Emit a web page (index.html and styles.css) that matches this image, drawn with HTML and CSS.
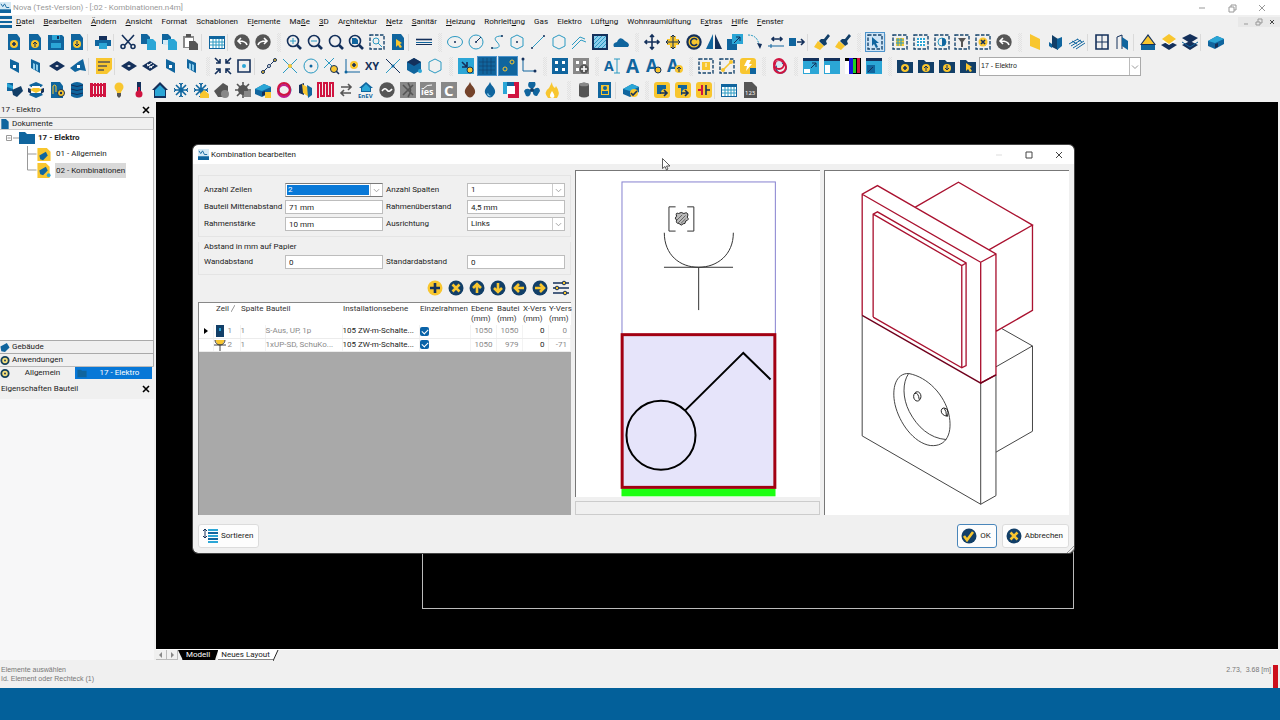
FILE: index.html
```html
<!DOCTYPE html>
<html lang="de">
<head>
<meta charset="utf-8">
<title>Nova (Test-Version)</title>
<link rel="stylesheet" href="styles.css">
</head>
<body>
<header class="titlebar">
  <svg class="app-icon" viewBox="0 0 12 12"><path class="pale" d="M0 0h12v12H0z"/><path class="b" d="M0 8h12v4H0z"/><path class="sb" d="M1 2l2 3 2-3 2 4 3 0"/></svg>
  <span class="titlebar-text">Nova (Test-Version) - [:02 - Kombinationen.n4m]</span>
  <div class="window-controls">
    <button aria-label="Minimieren"><svg viewBox="0 0 10 10"><path class="sc" d="M2 5h6"/></svg></button>
    <button aria-label="Wiederherstellen"><svg viewBox="0 0 10 10"><path class="sc" d="M2 4h5v5H2zM4 4V2h5v5H7"/></svg></button>
    <button aria-label="Schließen"><svg viewBox="0 0 10 10"><path class="sc" d="M2 2l6 6M8 2l-6 6"/></svg></button>
  </div>
</header>
<div class="menubar">
  <svg class="menu-icon" viewBox="0 0 12 12"><path class="b" d="M0 0h12v3H0zM0 5h12v2H0zM0 9h12v3H0z"/></svg>
  <nav class="menu">
    <button><u>D</u>atei</button><button><u>B</u>earbeiten</button><button><u>Ä</u>ndern</button><button><u>A</u>nsicht</button><button>Format</button><button>Schablonen</button><button>E<u>l</u>emente</button><button>Ma<u>ß</u>e</button><button><u>3</u>D</button><button>Ar<u>c</u>hitektur</button><button><u>N</u>etz</button><button><u>S</u>anitär</button><button><u>H</u>eizung</button><button>Rohrleit<u>u</u>ng</button><button>Gas</button><button>Elektro</button><button>Lüft<u>u</u>ng</button><button>Wohnraumlüftung</button><button>E<u>x</u>tras</button><button><u>H</u>ilfe</button><button><u>F</u>enster</button>
  </nav>
  <div class="mdi-controls">
    <button aria-label="Dokument minimieren"><svg viewBox="0 0 10 10"><path class="sc" d="M3 7h4"/></svg></button>
    <button aria-label="Dokument wiederherstellen"><svg viewBox="0 0 10 10"><path class="sc" d="M2 5h4v3H2zM4 5V2h4v4H6"/></svg></button>
    <button aria-label="Dokument schließen"><svg viewBox="0 0 10 10"><path class="sd" d="M3 3l4 4M7 3l-4 4"/></svg></button>
  </div>
</div>
<div class="toolbars">
  <div class="toolbar" id="bar-main"></div>
  <div class="toolbar inset" id="bar-draw"></div>
  <div class="toolbar inset" id="bar-apps"></div>
</div>

<main class="main">
  <aside class="side">
    <div class="side-head"><span>17 - Elektro</span><button class="close" aria-label="Bereich schließen"><svg viewBox="0 0 8 8"><path class="sk" d="M1 1l6 6M7 1l-6 6"/></svg></button></div>
    <button class="side-bar"><svg viewBox="0 0 10 12"><path class="b" d="M1 1h5l3 3v8H1z"/></svg>Dokumente</button>
    <div class="tree">
      <div class="tree-row root"><svg class="expander" viewBox="0 0 14 8"><path class="sc" d="M1.500 1.500h5v5h-5zM2.500 4h3M8 4h6"/></svg><svg class="folder" viewBox="0 0 16 14"><path class="b" d="M0 1h6l2 2h8v10H0z"/></svg><b>17 - Elektro</b></div>
      <div class="tree-row leaf"><svg class="branch" viewBox="0 0 10 16"><path class="sc" d="M.5 0v16M.5 8h9"/></svg><svg class="doc" viewBox="0 0 14 16"><path class="y" d="M0 1h10l4 4v10H0z"/><path class="b" d="M2 9l7-4 2 4-5 5-3-1z"/></svg><span>01 - Allgemein</span></div>
      <div class="tree-row leaf"><svg class="branch" viewBox="0 0 10 16"><path class="sc" d="M.5 0v8h9"/></svg><svg class="doc" viewBox="0 0 14 16"><path class="y" d="M0 0h9l4 4v12H0z"/><path class="b" d="M2 8l7-4 2 4-5 5-3-1z"/><circle class="l" cx="12" cy="13" r="2"/></svg><span class="current">02 - Kombinationen</span></div>
    </div>
    <button class="side-bar"><svg viewBox="0 0 10 12"><path class="b" d="M0 5l7-4 3 5-5 5-4-1z"/></svg>Gebäude</button>
    <button class="side-bar"><svg viewBox="0 0 10 12"><circle class="ring" cx="5" cy="6" r="4"/><circle class="n" cx="5" cy="6" r="1"/></svg>Anwendungen</button>
    <div class="side-tabs">
      <button><svg viewBox="0 0 10 12"><circle class="ring" cx="5" cy="6" r="4"/><circle class="n" cx="5" cy="6" r="1"/></svg><span>Allgemein</span></button>
      <button class="active"><svg viewBox="0 0 10 12"><path class="b" d="M0 2h4l1 1h5v7H0z"/></svg><span>17 - Elektro</span></button>
    </div>
    <div class="side-head props"><span>Eigenschaften Bauteil</span><button class="close" aria-label="Eigenschaften schließen"><svg viewBox="0 0 8 8"><path class="sk" d="M1 1l6 6M7 1l-6 6"/></svg></button></div>
    <div class="side-empty"></div>
  </aside>

  <section class="work">
    <div class="canvas">
      <div class="room"></div>
      <div class="dialog" role="dialog" aria-label="Kombination bearbeiten">
        <div class="dialog-title">
          <svg class="app-icon" viewBox="0 0 12 12"><path class="pale" d="M0 0h12v12H0z"/><path class="b" d="M0 8h12v4H0z"/><path class="sb" d="M1 2l2 3 2-3 2 4 3 0"/></svg>
          <span>Kombination bearbeiten</span>
          <div class="window-controls dialog-controls">
            <button aria-label="Minimieren" disabled><svg viewBox="0 0 10 10"><path class="sx" d="M2 5h6"/></svg></button>
            <button aria-label="Maximieren"><svg viewBox="0 0 10 10"><path class="sd" d="M2 2h6v6H2z"/></svg></button>
            <button aria-label="Schließen"><svg viewBox="0 0 10 10"><path class="sd" d="M2 2l6 6M8 2l-6 6"/></svg></button>
          </div>
        </div>
        <div class="dialog-body">
          <div class="settings">
            <div class="group fields">
              <label for="rows">Anzahl Zeilen</label>
              <div class="select focus"><select id="rows"><option>2</option></select><svg viewBox="0 0 8 8"><path class="sc" d="M1 3l3 3 3-3"/></svg></div>
              <label for="cols">Anzahl Spalten</label>
              <div class="select"><select id="cols"><option>1</option></select><svg viewBox="0 0 8 8"><path class="sc" d="M1 3l3 3 3-3"/></svg></div>
              <label for="mid">Bauteil Mittenabstand</label><input id="mid" value="71 mm">
              <label for="over">Rahmenüberstand</label><input id="over" value="4,5 mm">
              <label for="thick">Rahmenstärke</label><input id="thick" value="10 mm">
              <label for="align">Ausrichtung</label>
              <div class="select"><select id="align"><option>Links</option></select><svg viewBox="0 0 8 8"><path class="sc" d="M1 3l3 3 3-3"/></svg></div>
            </div>
            <div class="group paper">
              <div class="legend">Abstand in mm auf Papier</div>
              <div class="fields">
                <label for="wall">Wandabstand</label><input id="wall" value="0">
                <label for="std">Standardabstand</label><input id="std" value="0">
              </div>
            </div>
            <div class="actions">
              <button aria-label="Hinzufügen"><svg viewBox="0 0 16 16"><circle class="y" cx="8" cy="8" r="7.500"/><path class="sn3" d="M8 3v10M3 8h10"/></svg></button>
              <button aria-label="Entfernen"><svg viewBox="0 0 16 16"><circle class="dk" cx="8" cy="8" r="7.500"/><path class="sy3" d="M4.500 4.500l7 7M11.500 4.500l-7 7"/></svg></button>
              <button aria-label="Nach oben"><svg viewBox="0 0 16 16"><circle class="dk" cx="8" cy="8" r="7.500"/><path class="sy3" d="M8 13V5M4 8l4-4 4 4"/></svg></button>
              <button aria-label="Nach unten"><svg viewBox="0 0 16 16"><circle class="dk" cx="8" cy="8" r="7.500"/><path class="sy3" d="M8 3v8M4 8l4 4 4-4"/></svg></button>
              <button aria-label="Nach links"><svg viewBox="0 0 16 16"><circle class="dk" cx="8" cy="8" r="7.500"/><path class="sy3" d="M13 8H5M8 4L4 8l4 4"/></svg></button>
              <button aria-label="Nach rechts"><svg viewBox="0 0 16 16"><circle class="dk" cx="8" cy="8" r="7.500"/><path class="sy3" d="M3 8h8M8 4l4 4-4 4"/></svg></button>
              <button aria-label="Optionen"><svg viewBox="0 0 16 16"><path class="sn2" d="M0 3h16M0 8h16M0 13h16"/><circle class="knob" cx="11" cy="3" r="1.800"/><circle class="knob" cx="4" cy="8" r="1.800"/><circle class="knob" cx="12" cy="13" r="1.800"/></svg></button>
            </div>
            <div class="grid-area">
              <table>
                <colgroup><col class="c-mark"><col class="c-row"><col class="c-col"><col class="c-part"><col class="c-level"><col class="c-frame"><col class="c-num"><col class="c-num"><col class="c-num"><col></colgroup>
                <thead><tr><th></th><th>Zeil<svg class="sort" viewBox="0 0 4 8"><path class="sc" d="M0 8l4-7"/></svg></th><th>Spalte</th><th>Bauteil</th><th>Installationsebene</th><th>Einzelrahmen</th><th>Ebene<br>(mm)</th><th>Bautei<br>(mm)</th><th>X-Vers<br>(mm)</th><th>Y-Vers<br>(mm)</th></tr></thead>
                <tbody>
                  <tr><td><svg class="marker" viewBox="0 0 4 6"><path class="k" d="M0 0l4 3-4 3z"/></svg></td><td><svg class="part" viewBox="0 0 12 12"><path class="dk" d="M2 0h8v12H2z"/><path class="l" d="M5 3h2v3H5z"/></svg>1</td><td>1</td><td>S-Aus, UP, 1p</td><td class="on">105 ZW-m-Schalte...</td><td><input type="checkbox" checked aria-label="Einzelrahmen Zeile 1"></td><td class="num">1050</td><td class="num">1050</td><td class="num on">0</td><td class="num">0</td></tr>
                  <tr><td></td><td><svg class="part" viewBox="0 0 12 12"><path class="y" d="M1 1h10l-3 5H4z"/><path class="sd" d="M1 1a5 5 0 0 0 10 0M0 6h12M6 6v6"/></svg>2</td><td>1</td><td>1xUP-SD, SchuKo...</td><td class="on">105 ZW-m-Schalte...</td><td><input type="checkbox" checked aria-label="Einzelrahmen Zeile 2"></td><td class="num">1050</td><td class="num">979</td><td class="num on">0</td><td class="num">-71</td></tr>
                </tbody>
              </table>
            </div>
          </div>

          <div class="preview">
            <svg class="sheet" viewBox="16 90 735 981" preserveAspectRatio="xMidYMin meet">
              <rect x="154.500" y="123" width="462" height="460" fill="none" stroke="#8580cf" stroke-width="3"/>
              <rect x="153" y="1046" width="464" height="24" fill="#1cff12"/>
              <rect x="155" y="583" width="460" height="460" fill="#e6e4fa" stroke="#a20012" stroke-width="9"/>
              <g fill="none" stroke="#000" stroke-width="6"><circle cx="272" cy="886" r="104"/><path d="M345 811L520 638L602 718"/></g>
              <g fill="none" stroke="#333" stroke-width="3"><path d="M282 276C282 342 328 380 385 380S490 342 490 276M281 380H489M385.500 380V509"/><path d="M316 198H296V271H316M351 198H371V271H351"/></g>
              <path d="M325 218q8-6 16 0q12-6 12 5l-2 6q8 8-5 12q0 10-7 8l-6 4-7-5q-10 0-7-10q-8-6 0-12q-4-12 6-8z" fill="#bbb" stroke="#222" stroke-width="3"/><path d="M318 240l18-18M324 246l22-22M332 248l14-14" stroke="#333" stroke-width="2"/>
            </svg>
            <div class="preview-status"></div>
          </div>

          <div class="model">
            <svg viewBox="12 90 735 1035" preserveAspectRatio="xMidYMin meet" fill="none">
              <g stroke="#444" stroke-width="3"><path d="M124 525V888L481 1094L527 1068V704M481 729V1094M545 565L637 617V874L527 937M527 680L637 617"/>
              <path d="M264 700C225 699 212 745 223 794C236 849 279 909 329 917C380 922 397 877 385 822C372 766 323 711 264 700zM264 700C245 727 245 774 266 815C290 861 327 895 377 899"/><ellipse cx="290" cy="769" rx="11" ry="14" stroke="#222"/><path d="M283 760q10-4 13 19M380 808q-15-10-18 4q0 14 19 17q4-11-1-21zM371 805q7 8 7 23" stroke="#222"/></g>
              <g stroke="#aa1230" stroke-width="4"><path d="M124 525V160L170 134L527 340V704L481 729V365L124 160M481 365L527 340M284 199L414 124L637 253L507 327M637 253V510L527 573"/><path d="M157 530V220L170 213L437 367V676L424 683L157 530M157 220L424 375V683M424 375L437 367"/></g>
              <path d="M124 525L481 729L527 704" stroke="#70001c" stroke-width="4"/>
            </svg>
          </div>
        </div>
        <div class="dialog-foot">
          <button class="btn"><svg viewBox="0 0 16 16"><path class="sn" d="M3 1v9M1 3l2-2 2 2M1 8l2 2 2-2"/><path class="l" d="M6 1h10v2H6zM6 7h10v2H6zM6 13h10v2H6z"/><path class="b" d="M6 4h10v2H6zM6 10h10v2H6z"/></svg>Sortieren</button>
          <span class="spacer"></span>
          <button class="btn primary"><svg viewBox="0 0 16 16"><circle class="dk" cx="8" cy="8" r="7.500"/><path class="sy3" d="M3 8l3 4 6-8"/></svg>OK</button>
          <button class="btn"><svg viewBox="0 0 16 16"><circle class="dk" cx="8" cy="8" r="7.500"/><path class="sy3" d="M4.500 4.500l7 7M11.500 4.500l-7 7"/></svg>Abbrechen</button>
        </div>
        <svg class="sizer" viewBox="0 0 7 7"><path class="sc" d="M0 7l7-7M3 7l4-4"/></svg>
      </div>
      <svg class="pointer" viewBox="0 0 9 13"><path d="M.5.5v10l2.500-2 1.500 3.500 1.500-1-1.500-3h3.500z" fill="#fff" stroke="#333" stroke-width=".8"/></svg>
    </div>
    <div class="sheet-tabs">
      <button class="step" aria-label="Zurück"><svg viewBox="0 0 8 8"><path class="gr" d="M5 1v6L2 4z"/></svg></button>
      <button class="step" aria-label="Vor"><svg viewBox="0 0 8 8"><path class="gr" d="M3 1v6l3-3z"/></svg></button>
      <button class="sheet-tab current-tab">Modell</button>
      <button class="sheet-tab">Neues Layout</button>
      <svg class="slash" viewBox="0 0 6 11"><path class="sk1" d="M0 11L5 0"/></svg>
    </div>
  </section>
</main>
<div class="status">
  <div>Elemente auswählen<br>Id. Element oder Rechteck (1)</div>
  <div class="coords">2.73,&nbsp; 3.68 [m]</div>
</div>
<footer class="band"></footer>
<script src="toolbars.js"></script>
</body>
</html>
```

FILE: styles.css
```css
* { box-sizing: border-box; }
body { margin: 0; min-height: 100vh; display: flex; flex-direction: column; background: #f0f0f0; color: #1b1b1b; font: 8px/10px Roboto, "Open Sans", sans-serif; }
button, input, select { font: inherit; color: inherit; }
button { border: 0; padding: 0; background: none; }
svg { display: block; flex: none; }

/* icon palette */
.n { fill: #14305b; } .b { fill: #10659e; } .l { fill: #2ba6d6; } .y { fill: #f8c62f; } .g { fill: #555; } .r { fill: #d01440; }
.w { fill: #fff; } .k { fill: #000; } .br { fill: #74432b; } .dk { fill: #123f68; } .gr { fill: #888; } .pale { fill: #d6eaf5; } .gn { fill: #1fd11f; } .bl { fill: #1717d8; } .hatch { fill: #8ccdec; }
.sn, .sb, .sl, .sy, .sg, .sw, .sr, .sm, .sc, .sd, .sk, .sx, .sk1, .sn2, .sn3, .sy2, .sy3, .dash, .sw2, .sg2, .sb2 { fill: none; stroke-width: 1; }
.sn, .sn2, .sn3 { stroke: #14305b; } .sb, .sb2 { stroke: #10659e; } .sl { stroke: #2b9ac2; } .sy, .sy2, .sy3 { stroke: #f8c62f; }
.sg, .sg2 { stroke: #555; } .sw, .sw2 { stroke: #fff; } .sr { stroke: #d01440; stroke-width: 2; } .sm { stroke: #c41b8b; stroke-width: 2; }
.sc { stroke: #999; } .sd { stroke: #444; } .sx { stroke: #ddd; } .sk { stroke: #000; } .sk1 { stroke: #222; }
.sn2, .sy2, .sw2, .sg2, .sb2 { stroke-width: 1.6; } .sn3, .sy3 { stroke-width: 2.6; }
.dash { stroke: #17456e; stroke-width: 1.4; stroke-dasharray: 3.5 1.5; }
.knob { fill: #f8c62f; stroke: #14305b; }
.ring { fill: #f8e27a; stroke: #14405b; stroke-width: 2; }
.glyph { font-family: "Open Sans", sans-serif; font-weight: 700; }
.glyph.thin { font-weight: 400; }

.titlebar { display: flex; align-items: center; height: 15px; background: #fff; color: #999; }
.app-icon { width: 11px; height: 11px; }
.titlebar-text { margin-left: 2px; }
.window-controls { display: flex; gap: 20px; margin-left: auto; padding-right: 13px; }
.window-controls svg { width: 10px; height: 10px; }

.menubar { display: flex; align-items: center; height: 14px; }
.menu-icon { width: 12px; height: 12px; margin-right: 4px; }
.menu { display: flex; justify-content: space-between; width: 768px; white-space: nowrap; color: #111; }
.menu u { text-underline-offset: 1px; }
.mdi-controls { display: flex; gap: 3px; margin-left: auto; padding: 0 3px; background: #e8e8e8; }
.mdi-controls svg { width: 10px; height: 10px; }

.toolbars { padding: 1px 0 0 4px; height: 73px; }
.toolbar { display: flex; align-items: center; height: 24px; }
.toolbar.inset { padding-left: 1px; }
.tool-group { display: flex; justify-content: space-around; }
.tool { width: 20px; height: 20px; display: grid; place-items: center; }
.tool svg { width: 16px; height: 16px; overflow: visible; }
.tool.pressed { background: #cfe4f5; outline: 1px solid #4d94cc; outline-offset: -1px; }
.sep { width: 5px; height: 17px; border-left: 1px solid #dadada; }
.grip { width: 11px; display: flex; justify-content: center; }
.grip::before { content: ""; width: 4px; height: 19px; background: repeating-conic-gradient(#e2e2e2 0 25%, #f0f0f0 0 50%) 0 0 / 2px 2px; }
.layer-select { width: 162px; height: 19px; margin-left: 1px; position: relative; background: #fff; border: 1px solid #aaa; font-size: 7px; font-family: "Liberation Sans", sans-serif; }
.layer-select select { width: 100%; height: 100%; padding: 0 1px; border: 0; background: none; appearance: none; }
.layer-select svg { position: absolute; right: 0; top: 0; width: 11px; height: 17px; border-left: 1px solid #bbb; padding: 0 1px; pointer-events: none; }

.main { flex: 1; display: flex; min-height: 558px; }
.side { width: 154px; display: flex; flex-direction: column; flex: none; }
.side-head { display: flex; align-items: center; justify-content: space-between; height: 15px; padding: 0 4px 0 1px; }
.close svg { width: 8px; height: 8px; }
.close .sk { stroke-width: 1.6; }
.side-bar { display: flex; align-items: center; gap: 2px; height: 13px; border-top: 1px solid #aaa; border-right: 1px solid #aaa; text-align: left; }
.side-bar svg, .side-tabs svg { width: 10px; height: 11px; }
.side-bar:first-of-type { border-bottom: 1px solid #ccc; }
.tree { flex: none; height: 210px; background: #fff; border-right: 1px solid #bbb; }
.tree-row { display: flex; align-items: center; height: 16px; }
.root { padding-left: 5px; }
.expander { width: 14px; height: 8px; }
.folder { width: 16px; height: 14px; margin-right: 3px; }
.leaf { padding-left: 27px; }
.branch { width: 10px; height: 16px; }
.doc { width: 14px; height: 15px; margin-right: 5px; }
.current { background: #d9d9d9; line-height: 15px; padding: 0 1px; margin-left: -1px; }
.side-tabs { display: flex; height: 13px; padding: 0 2px 0 0; border-top: 1px solid #bbb; }
.side-tabs button { flex: 1; display: flex; align-items: center; }
.side-tabs span { flex: 1; text-align: center; }
.side-tabs .active { background: #0878d7; color: #fff; padding-left: 2px; }
.props { height: 20px; }
.side-empty { flex: 1; background: #f7f7f8; }

.work { flex: 1; margin: 0 2px 0 2px; display: flex; flex-direction: column; }
.canvas { flex: 1; position: relative; background: #000; }
.room { position: absolute; left: 266px; top: 300px; width: 652px; height: 207px; border: 1px solid #bbb; }
.dialog { position: absolute; left: 37px; top: 43px; width: 881px; background: #f0f0f0; border-radius: 5px; overflow: hidden; display: flex; flex-direction: column; outline: 1px solid #444; }
.dialog-title { display: flex; align-items: center; gap: 2px; height: 19px; padding-left: 5px; background: #fff; }
.dialog-controls { padding-right: 10px; }
.dialog-body { display: grid; grid-template-columns: 373fr 245fr 245fr; gap: 4px; padding: 6px 5px 0; }
.settings { display: flex; flex-direction: column; }
.group { border: 1px solid #e4e4e4; }
.settings > .fields { margin-top: 5px; padding: 7px 5px 5px 5px; }
.fields { display: grid; grid-template-columns: 81px 98px 84px 98px; row-gap: 3px; align-items: center; }
.fields label:nth-of-type(even) { padding-left: 3px; }
.fields input { width: 100%; min-width: 0; height: 14px; padding: 0 3px; border: 1px solid #bdbdbd; background: #fff; }
.select { position: relative; height: 14px; background: #fff; border: 1px solid #bdbdbd; }
.select select { display: block; width: 100%; height: 12px; padding: 0 3px; border: 0; background: none; appearance: none; line-height: 12px; }
.select svg { position: absolute; right: 0; top: 0; width: 12px; height: 12px; padding: 2px; border-left: 1px solid #ccc; pointer-events: none; }
.select.focus { border-color: #7a7a7a #bdbdbd; }
.select.focus select { width: 84px; padding: 0 2px; background: #0878d7; color: #fff; outline: 1px solid #fff; outline-offset: -1px; }
.paper { margin-top: 5px; padding: 0 5px 5px 5px; border-top: 0; }
.legend { margin-bottom: 3px; }
.actions { display: flex; justify-content: flex-end; gap: 5px; padding: 5px 2px 6px 0; }
.actions svg { width: 16px; height: 16px; }

.grid-area { flex: 1; background: #a9a9a9; border: 1px solid #888; border-right: 0; border-bottom: 0; }
table { width: 100%; table-layout: fixed; border-collapse: collapse; background: #fff; color: #8a8a8a; }
th { height: 22px; padding: 1px 0 0 1px; vertical-align: top; text-align: left; font-weight: 400; color: #333; white-space: nowrap; }
th:nth-child(2) { padding-left: 3px; }
.sort { display: inline-block; width: 4px; height: 8px; margin-left: 2px; vertical-align: top; }
td { height: 13px; padding: 0; border-bottom: 1px solid #ececec; border-right: 1px solid #f3f3f3; white-space: nowrap; }
td svg { display: inline-block; vertical-align: middle; }
td.on { color: #222; }
td.num { text-align: right; padding-right: 3px; }
.marker { width: 4px; height: 6px; margin-left: 5px; }
.part { width: 12px; height: 12px; margin-right: 2px; }
td input { appearance: none; display: block; width: 9px; height: 9px; margin: 0; border-radius: 2px; background: #0a63a8; position: relative; }
td input::after { content: ""; position: absolute; left: 2px; top: 2px; width: 5px; height: 3px; border: solid #fff; border-width: 0 0 1px 1px; transform: rotate(-45deg); }
.c-mark { width: 14px; } .c-row { width: 27px; } .c-col { width: 25px; } .c-part { width: 77px; } .c-level { width: 77px; } .c-frame { width: 51px; } .c-num { width: 26px; }

.preview { display: flex; flex-direction: column; gap: 4px; }
.sheet, .model { background: #fff; border-top: 1px solid #777; border-left: 1px solid #777; }
.sheet { width: 100%; }
.model svg { width: 100%; }
.preview-status { height: 14px; border: 1px solid #ccc; }
.dialog-foot { display: flex; gap: 5px; padding: 9px 5px 5px; }
.spacer { flex: 1; }
.btn { display: flex; align-items: center; gap: 3px; height: 24px; padding: 0 5px 0 3px; background: #fdfdfd; border: 1px solid #dcdcdc; border-radius: 3px; }
.btn svg { width: 16px; height: 16px; }
.btn.primary { border-color: #4a86ba; }
.sizer { position: absolute; right: 0; bottom: 0; width: 7px; height: 7px; }
.pointer { position: absolute; left: 506px; top: 56px; width: 9px; height: 13px; }

.sheet-tabs { display: flex; align-items: stretch; height: 11px; background: #f0f0f0; border-top: 1px solid #fff; }
.step { width: 11px; border: 1px solid #bbb; border-width: 0 1px 1px 0; }
.step svg { width: 8px; height: 8px; margin: auto; }
.sheet-tab { padding: 0 3px; background: #fff; line-height: 9px; border-bottom: 1px solid #888; }
.current-tab { padding: 0 8px; background: #000; color: #fff; border-color: #000; clip-path: polygon(0 0, 100% 0, 92% 100%, 12% 100%); }
.slash { width: 6px; height: 11px; background: linear-gradient(115deg, #fff 50%, #f0f0f0 50%); }

.status { display: flex; justify-content: space-between; height: 28px; padding: 5px 2px 0 1px; color: #777; font-size: 7px; font-family: "Liberation Sans", sans-serif; line-height: 9px; }
.coords { border-right: 5px solid #cc0f1c; padding-right: 2px; }
.band { height: 32px; background: #03609a; }
```

FILE: toolbars.js
```js
const p = (c, d) => `<path class="${c}" d="${d}"/>`;
const c = (k, x, y, r) => `<circle class="${k}" cx="${x}" cy="${y}" r="${r}"/>`;
const t = (k, x, y, s, v) => `<text class="glyph ${k}" x="${x}" y="${y}" font-size="${s}">${v}</text>`;

const doc = p('b', 'M2 0h9l3 4v12H2z');
const badge = c('y', 8, 10, 4);
const glass = c('sn2', 7, 7, 5.5) + p('sn3', 'M11 11l4 4');
const frame = '<rect class="dash" x="1" y="1" width="14" height="14"/>';
const folder = p('dk', 'M0 2h6l2 2h8v11H0z');
const disc = c('g', 8, 8, 7.7);
const plane = p('b', 'M3 1l9 4v10l-9-5z');
const grey = p('gr', 'M0 0h16v16H0z');
const gold = '<rect class="y" x="0" y="0" width="16" height="16" rx="3"/>';
const sun = c('l', 8, 8, 2.5) + p('sb2', 'M8 1v14M1 8h14M3 3l10 10M13 3L3 13') + p('sb', 'M6 1l2 2 2-2M6 15l2-2 2 2M1 6l2 2-2 2M15 6l-2 2 2 2');
const darkSun = p('sg2', 'M8 0v16M0 8h16M2 2l12 12M14 2L2 14') + c('g', 8, 8, 5);
const cross4 = 'M8 1v14M1 8h14M6 3l2-2 2 2M6 13l2 2 2-2M3 6L1 8l2 2M13 6l2 2-2 2';
const table = p('b', 'M0 2h16v13H0z') + p('w', 'M1 5h14v9H1z') + p('sl', 'M1 8h14M1 11h14M4 5v9M7 5v9M10 5v9M13 5v9');
const flat = p('n', 'M0 8l8-5 8 5-8 5z');
const brush = p('dk', 'M14 0l2 2-4 5 1 3-3 2-5-5 2-2 3 0z') + p('y', 'M4 7l6 5-4 4-6-3z');
const beam = p('b', 'M0 7l9-5 7 3v5l-9 5-7-3z') + p('l', 'M0 7l9-5 7 3-9 4z') + p('n', 'M7 10l3-1v4l-3 1z');

const art = {
  neu: doc + badge + p('sn2', 'M8 8v4M6 10h4'),
  oeffnen: doc + badge + p('sn', 'M8 13V8M6 10l2-2 2 2'),
  speichern: p('b', 'M0 1h14l2 2v13H0z') + p('l', 'M4 1h8v5H4zM3 9h10v5H3z') + p('n', 'M9 2h2v3H9z'),
  exportieren: doc + badge + p('sn', 'M8 7v5M6 10l2 2 2-2'),
  drucken: p('b', 'M0 6h16v6H0z') + p('n', 'M4 2h8v4H4z') + p('l', 'M4 9h8v6H4z'),
  schneiden: c('sn2', 3, 12.5, 2) + c('sn2', 13, 12.5, 2) + p('sn2', 'M2 1l9 10M14 1L5 11'),
  kopieren: p('b', 'M0 0h6l3 3v7H0z') + p('l', 'M6 5h6l3 3v8H6z'),
  kopieren2: p('b', 'M0 0h6l3 3v7H0z') + p('l', 'M6 5h6l3 3v8H6z') + p('pale', 'M1 6h5v5H1z'),
  einfuegen: p('gr', 'M0 2h11v12H0z') + p('w', 'M2 4h8v9H2z') + p('g', 'M3 0h5v3H3zM6 7h6l3 3v6H6z'),
  tabelle: table,
  zurueck: disc + p('sw2', 'M13 11q-1-4-8-4M7 4L4 7l3 3'),
  vor: disc + p('sw2', 'M3 11q1-4 8-4M9 4l3 3-3 3'),
  zoomPlus: glass + p('sl', 'M7 4v6M4 7h6'),
  zoomMinus: glass + p('sl', 'M4 7h6'),
  zoom: glass,
  zoomBlatt: glass + p('b', 'M4 4h4l2 2v4H4z'),
  zoomFenster: frame + c('sl', 7, 7, 3) + p('sl', 'M9 9l4 4'),
  auswahlBlatt: doc + p('y', 'M6 5l6 4-2 1 2 3-2 1-2-3-2 2z'),
  linien: p('sn2', 'M0 5.500h16') + p('sb', 'M0 8.500h16') + p('sn', 'M0 10.500h16'),
  ellipse: '<ellipse class="sl" cx="8" cy="8" rx="7.500" ry="5.500"/>' + c('n', 8, 8, 1),
  kreis: c('sl', 8, 8, 7) + p('sn', 'M8 8l5-5') + c('n', 8, 8, 1),
  spline: p('sl', 'M3 14c9 1 8-3 5-6s-3-6 5-6') + c('n', 3, 14, 1) + c('n', 13, 2, 1),
  vieleckMitte: p('sl', 'M8 1l6 3v8l-6 3-6-3V4z') + c('n', 8, 8, 1),
  linie: p('sl', 'M2 14L14 2') + c('n', 2, 14, 1) + c('n', 14, 2, 1),
  vieleck: p('sl', 'M8 1l6 3v8l-6 3-6-3V4z'),
  polylinie: p('sl', 'M1 11l8-8 5 2M1 15l9-9 5 2'),
  schraffur: p('n', 'M0 0h16v16H0z') + p('hatch', 'M2 2h12v12H2z') + p('sl', 'M2 6l4-4M2 10l8-8M2 14L14 2M6 14l8-8M10 14l4-4'),
  wolke: p('b', 'M1 13q-2-4 3-5q3-7 8-1q6 3 3 6z'),
  schieben: p('sn2', cross4),
  kopierenSchieben: p('y', 'M2 5h12v6H2zM5 2h6v12H5z') + p('sn', cross4),
  drehen: c('n', 8, 8, 7.7) + c('y', 8, 8, 5.5) + p('sn2', 'M11 6a3.500 3.500 0 1 0 0 4'),
  spiegeln: p('b', 'M7 0v15H0z') + p('n', 'M9 0v15h7z'),
  skalieren: p('b', 'M0 5h10v11H0z') + p('l', 'M5 0h11v10H5z') + p('sn', 'M7 9l6-6M9 3h4v4'),
  bogen: '<path class="sl" stroke-dasharray="2 1" d="M1 1c7 0 10 4 11 10"/>' + p('n', 'M10 9l5 1-2 5z'),
  messen: p('sn2', 'M4 5h10M6 3L4 5l2 2M12 3l2 2-2 2') + p('sb', 'M0 12h16M3 10v4'),
  versetzen: p('b', 'M0 4h7v8H0z') + p('sn2', 'M8 8h7M12 5l3 3-3 3'),
  pinsel: brush, pinselPlus: brush,
  auswahl: frame + p('b', 'M5 3l7 6H9l2 4-2 1-2-4-2 2z'),
  auswahlPunkte: frame + p('y', 'M4 4h8v8H4z') + p('sl', 'M4 6h8M4 9h8M6 4v8M9 4v8'),
  auswahlGitter: frame + p('l', 'M4 4h8v8H4z') + p('sw', 'M4 6.500h8M4 9.500h8M6.500 4v8M9.500 4v8'),
  auswahlUmkehr: frame + c('sl', 8, 8, 4) + p('b', 'M8 4a4 4 0 0 1 0 8z'),
  auswahlFilter: frame + p('g', 'M4 4h8L9 8v5H7V8z'),
  auswahlLoeschen: frame + c('y', 8, 8, 4.5) + p('sn2', 'M6 6l4 4M10 6l-4 4'),
  wand: p('y', 'M3 0l10 5v11L3 12z'),
  ecke: p('dk', 'M4 1l6 4v11l-6-3z') + p('b', 'M9 5l5-2v9l-5 4zM1 8l3 2v4l-3-2z'),
  decke: p('sb', 'M0 10l9-5M2 12l10-6M4 14l11-7M7 15l9-6M3 7l5 3M8 5l5 3'),
  fenster: p('sn2', 'M2 1h12v14H2z') + p('sn', 'M8 1v14M2 8h12'),
  tuer: p('sn', 'M2 15V3l5-2v14') + p('b', 'M7 3l6 4v9l-6-4z'),
  dach: p('b', 'M1 10h14v6H1z') + p('n', 'M8 0l8 11H0z') + p('y', 'M8 2l6 8H2z'),
  ebenen: p('n', 'M0 11l8-4 8 4-8 5z') + p('w', 'M1 7l7-4 7 4-7 4z') + p('y', 'M1 5l7-5 7 5-7 5z'),
  ebenenBlau: p('n', 'M0 11l8-4 8 4-8 5zM0 4l8-4 8 4-8 5z') + p('sb', 'M0 8l8 5 8-5'),
  traeger: beam,

  flaeche: plane + p('w', 'M6 7h3v3H6z'),
  flaeche2: plane + p('hatch', 'M5 5l2 1v6l-2-1zM8 6l2 1v6l-2-1z'),
  flach: flat + p('w', 'M6 8l2-1 2 1-2 1z'),
  flachDreh: p('b', 'M0 10l8-6 5-3 3 12-6-1-5 2z') + p('w', 'M7 7h3v3H7z'),
  notiz: p('y', 'M0 0h16v11l-5 5H0z') + p('sg2', 'M2 4h12M2 8h9M2 12h6'),
  flachGitter: flat + p('sw', 'M5 8l5-3M7 10l5-3M5 6l5 4'),
  fang: p('sn2', 'M0 0l5 5M16 0l-5 5M0 16l5-5M16 16l-5-5M1 5h4V1M15 5h-4V1M1 11h4v4M15 11h-4v4'),
  quadrat: p('sn2', 'M2 2h12v12H2z') + c('l', 8, 8, 2),
  endpunkt: p('sn', 'M2 14L14 2') + c('w', 8, 8, 2) + c('knob', 2, 14, 1.5) + c('knob', 14, 2, 1.5) + c('sn', 8, 8, 1.5),
  schnitt: p('sl', 'M1 1l14 14M15 1L1 15') + c('y', 8, 8, 2),
  mitte: c('sl', 8, 8, 7) + c('b', 8, 8, 1.5),
  lot: p('sl', 'M1 10L11 0M2 1l8 8') + c('knob', 11, 11, 3.5) + p('sn2', 'M13 13l3 3'),
  relativ: p('sb', 'M2 1v13h14') + c('y', 10, 7, 4) + p('sn2', 'M10 5v4M8 7h4') + c('b', 2, 14, 1.5),
  xy: t('n', 0, 12, 11, 'XY'),
  kreuz: p('sn', 'M1 1l14 14') + p('sl', 'M15 1L1 15') + c('b', 8, 8, 1.5),
  wuerfel: p('b', 'M1 4l7-4 7 4v8l-7 4-7-4z') + p('n', 'M1 4l7-4 7 4-7 4z') + c('l', 14, 13, 2),
  rasterFang: p('l', 'M0 0h16v16H0z') + p('sn2', 'M4 4l5 5M9 4v5H4') + c('knob', 12, 12, 3),
  raster: p('b', 'M-1-1h18v18H-1z') + '<path class="sn" opacity=".45" d="M4 0v16M8 0v16M12 0v16M0 4h16M0 8h16M0 12h16"/>',
  rasterPunkte: p('b', 'M-1-1h18v18H-1z') + c('sy', 12, 4, 2) + c('sy', 5, 11, 2),
  ortho: p('sb', 'M2 1v12h12') + c('n', 2, 1, 1.5) + c('n', 14, 13, 1.5),
  anordnung: p('b', 'M0 0h16v16H0z') + p('w', 'M3 3h3v3H3zM10 3h3v3h-3zM3 10h3v3H3zM10 10h3v3h-3z'),
  anordnungPlus: grey + p('w', 'M3 3h3v3H3zM10 3h3v3h-3zM3 10h3v3H3z') + c('g', 11, 11, 4.5) + p('sw2', 'M11 8v6M8 11h6'),
  textmass: t('b', 0, 13, 14, 'A') + p('sl', 'M13 1v14M10 1h6M10 15h6'),
  text: t('b', 1, 15, 19, 'A'),
  textOption: t('b', 0, 14, 17, 'A') + c('knob', 12, 12, 3),
  textHoch: t('b', 0, 14, 17, 'A') + c('y', 12, 11, 4) + p('sn', 'M12 14V9M10 11l2-2 2 2'),
  blitzAuswahl: frame + p('y', 'M4 4h8v8H4z') + p('sw', 'M8 5v4'),
  blitzLinie: frame + p('sy2', 'M4 12l8-8') + c('y', 4, 12, 2) + c('y', 12, 4, 2),
  blitz: gold + p('w', 'M7 2h4L9 6h3l-6 7 1-5H4z') + p('b', 'M10 10h6v6h-6z'),
  ringe: c('sb2', 9, 10, 5) + c('sr', 7, 6, 5) + c('sr', 8, 9, 6) + c('pale', 7, 6, 3),
  maximieren: p('l', 'M0 0h16v16H0z') + p('n', 'M0 0h16v3H0z') + p('w', 'M1 11h6v4H1z') + p('sn', 'M8 10l5-5M9 5h4v4'),
  fensterKlein: p('l', 'M0 0h16v16H0z') + p('n', 'M0 0h16v3H0z') + p('w', 'M1 7h5v8H1z'),
  farben: p('k', 'M0 0h16v16H0z') + p('w', 'M0 3h4v13H0z') + p('bl', 'M4 0h4v16H4z') + p('gn', 'M8 1h3v14H8z') + p('r', 'M12 0h3v15h-3z'),
  fensterBlau: p('l', 'M0 0h16v16H0z') + p('n', 'M0 0h16v3H0z') + p('b', 'M1 7h8v8H1z') + p('sn', 'M2 14l5-5'),
  ordnerPlus: folder + badge + p('sn2', 'M8 8v4M6 10h4'),
  ordnerHoch: folder + badge + p('sn', 'M8 13V8M6 10l2-2 2 2'),
  ordnerRunter: folder + badge + p('sn', 'M8 7v5M6 10l2 2 2-2'),
  ordnerWahl: folder + p('y', 'M6 5l6 4-2 1 2 3-2 1-2-3-2 2z'),

  bauteil: p('b', 'M0 1h6v8H0z') + p('dk', 'M5 8l9-4 2 5-6 6-4-2z') + p('l', 'M0 1l6 3v3L0 5z'),
  stapel: p('b', 'M1 3l7-3 7 3-2 2H3zM1 13l7 3 7-3-2-2H3z') + p('n', 'M0 6l3 1v5l-3-2zM16 6l-3 1v5l3-2z') + p('w', 'M4 4h8v7H4z') + p('y', 'M2 8l3-2h6l3 2-6 3z'),
  dokZahnrad: doc + p('sy', 'M4 12V4q2-2 3 0v6') + c('knob', 12, 11, 3.5) + c('n', 12, 11, 1.2),
  tonne: p('b', 'M2 2q6-4 12 0v12q-6 4-12 0z') + p('sn', 'M2 3q6 3 12 0M2 7q6 3 12 0M2 11q6 3 12 0'),
  heizkoerper: p('r', 'M0 1h3v14H0zM4 1h2v14H4zM7 1h2v14H7zM10 1h2v14h-2zM13 1h3v14h-3zM0 2h16v2H0zM0 12h16v2H0z'),
  lampe: c('y', 8, 5, 4.5) + p('y', 'M5 7h6l-1 4H6z') + p('g', 'M6 11h4v3l-2 2-2-2z'),
  thermometer: p('n', 'M6 0h4v9H6z') + c('r', 8, 12, 3.5) + p('r', 'M7 5h2v6H7z'),
  haus: p('n', 'M8 0l8 8h-2v8H2V8H0z') + p('l', 'M8 3l5 5v6H3V8z'),
  sonne: sun,
  sonneHaus: sun + p('y', 'M11 8l5 4v4H7v-4z'),
  hausGrau: p('g', 'M0 9l9-8 5 3v11H4z') + c('gr', 11, 12, 4),
  sonneGrau: darkSun + p('gr', 'M9 9h7v6H9z'),
  bauteilGold: beam + p('y', 'M10 10h6v6h-6z'),
  ringMagenta: c('sb', 9, 8, 6) + c('sm', 8, 9, 6) + c('sr', 8, 7, 6),
  dreieck: p('n', 'M2 3l5-2v12l-5-2z') + p('y', 'M5 2l7 4v9l-6-4z') + p('b', 'M10 3l5 3v7l-4 3z'),
  schlange: p('sr', 'M1 16V1h3v13h3V1h3v13h3V1h3v14'),
  pfeile: p('sg2', 'M3 5h10M10 2l3 3-3 3M13 11H3M6 8l-3 3 3 3'),
  enev: p('b', 'M8 0l7 6h-2v4H3V6H1z') + p('l', 'M8 2l4 4v3H4V6z') + t('b', 0, 16, 6, 'EnEV'),
  welle: disc + p('sw2', 'M3 9q3-4 5-1t5-1'),
  spirale: grey + p('sg2', 'M3 13L13 3M3 3l10 10M8 1q5 7 0 14'),
  ies: grey + t('w', 1, 13, 9, 'ies') + p('sw', 'M3 7q4-5 9-4'),
  cad: grey + t('w', 3, 14, 15, 'C'),
  tropfenBraun: p('br', 'M8 0c2 5 6 6 5 11q-5 9-10 0C2 6 6 5 8 0z'),
  tropfen: p('b', 'M8 0c2 5 6 6 5 11q-5 9-10 0C2 6 6 5 8 0z') + p('hatch', 'M6 11q1 3 3 3-3 1-4-2z'),
  rahmen: p('b', 'M0 0h16v8H0z') + p('r', 'M11 0h5v16H5v-5h6z') + p('l', 'M0 0h4v12H0z') + p('w', 'M4 4h8v8H4z'),
  luefter: p('b', 'M8 7q-6-2-3-7h6q2 4-3 7zM9 8q6-5 7 1l-3 5q-5 0-4-6zM7 8q0 8-5 6l-2-5q2-4 7-1z') + c('dk', 8, 8, 2),
  flamme: p('y', 'M8 0q0 4 3 6l1-2q5 7 1 12H4q-5-6 1-10z') + p('w', 'M8 9q5 7 0 7-4-1 0-7z'),
  speicher: p('g', 'M3 2q5-3 10 0v12q-5 3-10 0z') + '<ellipse class="gr" cx="8" cy="2.500" rx="5" ry="1.800"/>',
  person: p('b', 'M1 0h13v16H1z') + p('y', 'M4 3h8v10H4z') + c('b', 8, 6, 2) + p('b', 'M5 9h6v3H5z'),
  pruefen: beam + c('y', 11, 11, 4) + p('sn2', 'M8 11l2 2 4-4'),
  schritt: gold + p('b', 'M3 3h9v9H3z') + c('y', 11, 11, 4) + p('sn2', 'M6 11h7M10 8l3 3-3 3'),
  schritt2: gold + p('b', 'M3 3h9v3H3zM6 6h6v7H6z') + c('y', 11, 11, 4) + p('sn2', 'M6 11h7M10 8l3 3-3 3'),
  trennen: gold + p('sr', 'M6 3v10M2 8h4') + p('sn2', 'M10 3v10M10 8h4'),
  nummern: p('g', 'M2 0h8l5 5v11H2z') + t('w thin', 3, 13, 6, '123')
};
const same = { flaeche3: 'flaeche', flaeche4: 'flaeche2', flach2: 'flach', zurueck2: 'zurueck', vieleck2: 'vieleck', tabelle2: 'tabelle', wandInfo: 'wand' };

const pressed = new Set(['auswahl', 'raster', 'rasterPunkte']);
const bars = {
  'bar-main': 'neu oeffnen speichern exportieren | drucken | schneiden kopieren kopieren2 einfuegen | tabelle | zurueck vor : zoomPlus zoomMinus zoom zoomBlatt zoomFenster auswahlBlatt | linien : ellipse kreis spline vieleckMitte linie vieleck polylinie schraffur wolke : schieben kopierenSchieben drehen spiegeln skalieren bogen messen versetzen | pinsel pinselPlus : auswahl | auswahlPunkte auswahlGitter auswahlUmkehr auswahlFilter auswahlLoeschen zurueck2 : wandInfo ecke decke | fenster tuer | dach ebenen ebenenBlau | traeger',
  'bar-draw': 'flaeche flaeche2 flach flachDreh | notiz | flach2 flachGitter flaeche3 flaeche4 : fang quadrat | endpunkt schnitt mitte lot relativ xy kreuz wuerfel vieleck2 : rasterFang raster rasterPunkte ortho : anordnung anordnungPlus : textmass text textOption textHoch : blitzAuswahl blitzLinie blitz : ringe : maximieren fensterKlein farben fensterBlau : ordnerPlus ordnerHoch ordnerRunter ordnerWahl',
  'bar-apps': 'bauteil stapel dokZahnrad tonne heizkoerper lampe thermometer haus sonne sonneHaus hausGrau sonneGrau bauteilGold ringMagenta dreieck schlange pfeile enev welle spirale ies cad tropfenBraun tropfen rahmen luefter flamme : speicher person | pruefen : schritt schritt2 trennen | tabelle2 nummern'
};
const PITCH = 20.65;

for (const [id, spec] of Object.entries(bars)) {
  document.getElementById(id).innerHTML = spec.split(/\s*([|:])\s*/).map(part => {
    if (part === '|') return '<span class="sep"></span>';
    if (part === ':') return '<span class="grip"></span>';
    const names = part.split(' ');
    const tools = names.map(n => `<button class="tool${pressed.has(n) ? ' pressed' : ''}" aria-label="${n}"><svg viewBox="0 0 16 16">${art[same[n] || n]}</svg></button>`).join('');
    return `<div class="tool-group" style="width:${Math.round(names.length * PITCH)}px">${tools}</div>`;
  }).join('');
}
document.getElementById('bar-draw').insertAdjacentHTML('beforeend',
  '<div class="layer-select"><select aria-label="Anwendung"><option>17 - Elektro</option></select><svg viewBox="0 0 8 8"><path class="sc" d="M1 3l3 3 3-3"/></svg></div>');
```
